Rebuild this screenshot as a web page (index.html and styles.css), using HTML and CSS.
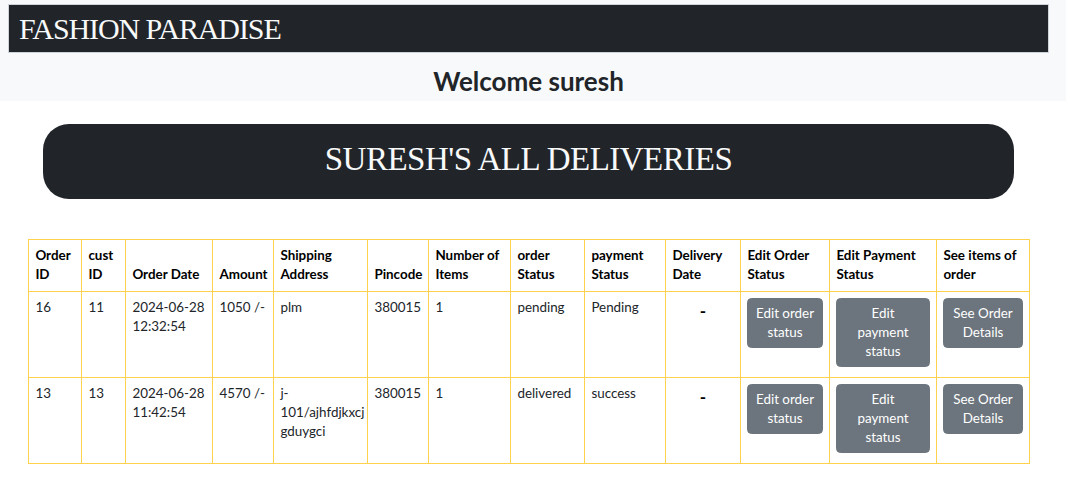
FILE: index.html
```html
<!DOCTYPE html>
<html lang="en">
<head>
<meta charset="utf-8">
<title>Fashion Paradise - Deliveries</title>
<link rel="stylesheet" href="styles.css">
</head>
<body>
<header class="top-band">
  <div class="wrap">
    <nav class="navbar"><span class="brand">FASHION PARADISE</span></nav>
    <h2 class="welcome">Welcome suresh</h2>
  </div>
</header>
<main class="wrap">
  <div class="title-pill"><h1>SURESH'S ALL DELIVERIES</h1></div>
  <table class="orders">
    <colgroup>
      <col class="c1"><col class="c2"><col class="c3"><col class="c4"><col class="c5"><col class="c6"><col class="c7"><col class="c8"><col class="c9"><col class="c10"><col class="c11"><col class="c12"><col class="c13">
    </colgroup>
    <thead>
      <tr>
        <th>Order<br>ID</th>
        <th>cust<br>ID</th>
        <th>Order Date</th>
        <th>Amount</th>
        <th>Shipping<br>Address</th>
        <th>Pincode</th>
        <th>Number of<br>Items</th>
        <th>order<br>Status</th>
        <th>payment<br>Status</th>
        <th>Delivery<br>Date</th>
        <th>Edit Order<br>Status</th>
        <th>Edit Payment<br>Status</th>
        <th>See items of<br>order</th>
      </tr>
    </thead>
    <tbody>
      <tr>
        <td>16</td>
        <td>11</td>
        <td>2024-06-28<br>12:32:54</td>
        <td>1050 /-</td>
        <td>plm</td>
        <td>380015</td>
        <td>1</td>
        <td>pending</td>
        <td>Pending</td>
        <td class="date"><span class="dash">-</span></td>
        <td><button class="btn">Edit order<br>status</button></td>
        <td><button class="btn">Edit<br>payment<br>status</button></td>
        <td><button class="btn">See Order<br>Details</button></td>
      </tr>
      <tr>
        <td>13</td>
        <td>13</td>
        <td>2024-06-28<br>11:42:54</td>
        <td>4570 /-</td>
        <td>j-<br>101/ajhfdjkxcj<br>gduygci</td>
        <td>380015</td>
        <td>1</td>
        <td>delivered</td>
        <td>success</td>
        <td class="date"><span class="dash">-</span></td>
        <td><button class="btn">Edit order<br>status</button></td>
        <td><button class="btn">Edit<br>payment<br>status</button></td>
        <td><button class="btn">See Order<br>Details</button></td>
      </tr>
    </tbody>
  </table>
</main>
</body>
</html>
```

FILE: styles.css
```css
* { box-sizing: border-box; }

body {
  margin: 0;
  background: #ffffff;
  color: #212529;
  font-family: Lato, "Noto Sans", sans-serif;
  font-size: 13.4px;
  line-height: 19.2px;
}

.wrap {
  width: 1057px;
}

.top-band {
  background: #f8f9fa;
  padding: 4px 0 4px;
}

.navbar {
  margin: 0 8px;
  height: 49px;
  background: #212529;
  border: 1px solid #ced4da;
  display: flex;
  align-items: center;
  padding-left: 10px;
}

.brand {
  font-family: "Liberation Serif", "DejaVu Serif", serif;
  font-size: 30px;
  letter-spacing: -1.1px;
  color: #f8f9fa;
  line-height: 1;
}

.welcome {
  margin: 13px 0 0;
  text-align: center;
  font-size: 26px;
  line-height: 31px;
  font-weight: 700;
  color: #212529;
}

.title-pill {
  margin: 23px 43px 0;
  height: 75px;
  background: #212529;
  border-radius: 26px;
  display: flex;
  align-items: center;
  justify-content: center;
}

.title-pill h1 {
  margin: 0;
  font-family: "Liberation Serif", "DejaVu Serif", serif;
  font-weight: normal;
  font-size: 33px;
  letter-spacing: -0.5px;
  color: #f8f9fa;
  line-height: 1;
  padding-bottom: 4px;
}

.orders {
  margin: 40px 28px 0;
  width: 1001px;
  table-layout: fixed;
  border-collapse: collapse;
  background: #ffffff;
}

.c1 { width: 53px; }
.c2 { width: 44px; }
.c3 { width: 87px; }
.c4 { width: 61px; }
.c5 { width: 94px; }
.c6 { width: 61px; }
.c7 { width: 82px; }
.c8 { width: 74px; }
.c9 { width: 81px; }
.c10 { width: 75px; }
.c11 { width: 89px; }
.c12 { width: 107px; }
.c13 { width: 93px; }

.orders th,
.orders td {
  border: 1px solid #ffd24d;
  padding: 6px 6.4px 6.4px;
  text-align: left;
  white-space: nowrap;
  overflow: visible;
}

.orders th {
  vertical-align: bottom;
  font-weight: 700;
  color: #000000;
}

.orders td {
  vertical-align: top;
  height: 86px;
}

.orders td.date {
  text-align: center;
}

.dash {
  display: inline-block;
  font-size: 17px;
  font-weight: 700;
  color: #000000;
  padding-top: 3px;
}

.btn {
  display: block;
  width: 100%;
  background: #6c757d;
  border: 1px solid #6c757d;
  border-radius: 4.5px;
  color: #ffffff;
  font-family: inherit;
  font-size: 13.4px;
  line-height: 19.2px;
  padding: 4.8px 6px;
  text-align: center;
  cursor: pointer;
}
```
